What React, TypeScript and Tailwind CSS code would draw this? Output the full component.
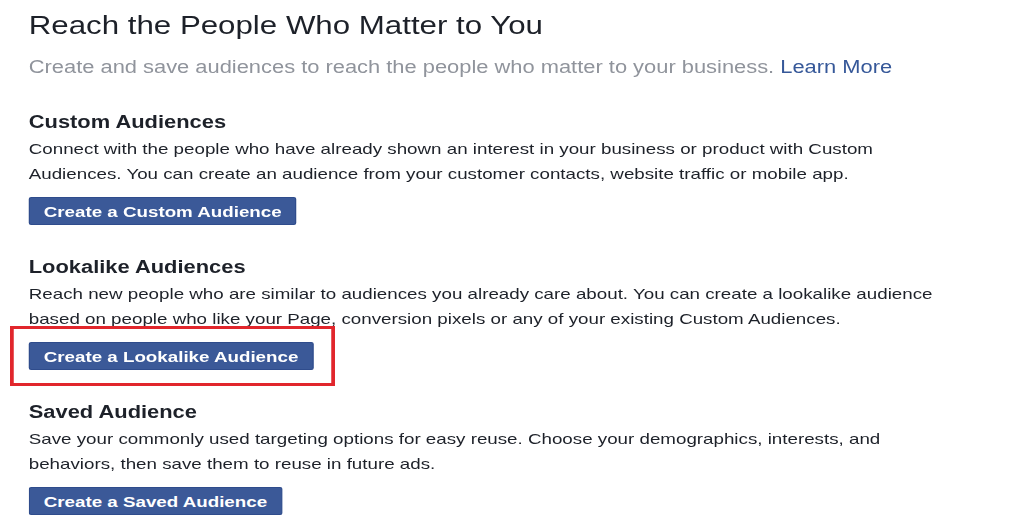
import React from "react";

const font = { fontFamily: '"Liberation Sans", Arial, Helvetica, sans-serif' };

function FbButton({ label }: { label: string }) {
  return (
    <button className="h-[28px] rounded-[2px] border border-[#2f4c8c] bg-[#3b5998] px-[11px] text-[15px] font-bold leading-none text-white whitespace-nowrap">
      {label}
    </button>
  );
}

function Section({
  title,
  lines,
  button,
  highlight = false,
}: {
  title: string;
  lines: [string, string];
  button: string;
  highlight?: boolean;
}) {
  return (
    <section className="flex flex-col items-start">
      <h2 className="text-[17.5px] font-bold leading-[22px] text-[#1d2129] whitespace-nowrap">{title}</h2>
      <p className="mt-[3px] text-[15px] leading-[25px] text-[#1d2129] whitespace-nowrap">
        {lines[0]}
        <br />
        {lines[1]}
      </p>
      <div className="relative mt-[11px] inline-flex">
        <FbButton label={button} />
        {highlight && (
          <div className="pointer-events-none absolute -left-[14.6px] -right-[17.6px] -top-[16px] -bottom-[16px] border-[3px] border-[#e1262c]" />
        )}
      </div>
    </section>
  );
}

export default function App() {
  return (
    <div className="min-h-[532px] w-full overflow-hidden bg-white">
      <div
        className="w-[829px] origin-top-left scale-x-[1.25] pl-[23px] pt-[10px] antialiased"
        style={font}
      >
        <h1 className="text-[25px] font-normal leading-[30px] text-[#1d2129] whitespace-nowrap">
          Reach the People Who Matter to You
        </h1>
        <p className="mt-[15px] text-[17.5px] leading-[24px] text-[#90949c] whitespace-nowrap">
          Create and save audiences to reach the people who matter to your business.{" "}
          <a className="text-[#365899]">Learn More</a>
        </p>
        <div className="mt-[32px] flex flex-col gap-[31px]">
          <Section
            title="Custom Audiences"
            lines={[
              "Connect with the people who have already shown an interest in your business or product with Custom",
              "Audiences. You can create an audience from your customer contacts, website traffic or mobile app.",
            ]}
            button="Create a Custom Audience"
          />
          <Section
            title="Lookalike Audiences"
            lines={[
              "Reach new people who are similar to audiences you already care about. You can create a lookalike audience",
              "based on people who like your Page, conversion pixels or any of your existing Custom Audiences.",
            ]}
            button="Create a Lookalike Audience"
            highlight
          />
          <Section
            title="Saved Audience"
            lines={[
              "Save your commonly used targeting options for easy reuse. Choose your demographics, interests, and",
              "behaviors, then save them to reuse in future ads.",
            ]}
            button="Create a Saved Audience"
          />
        </div>
      </div>
    </div>
  );
}
